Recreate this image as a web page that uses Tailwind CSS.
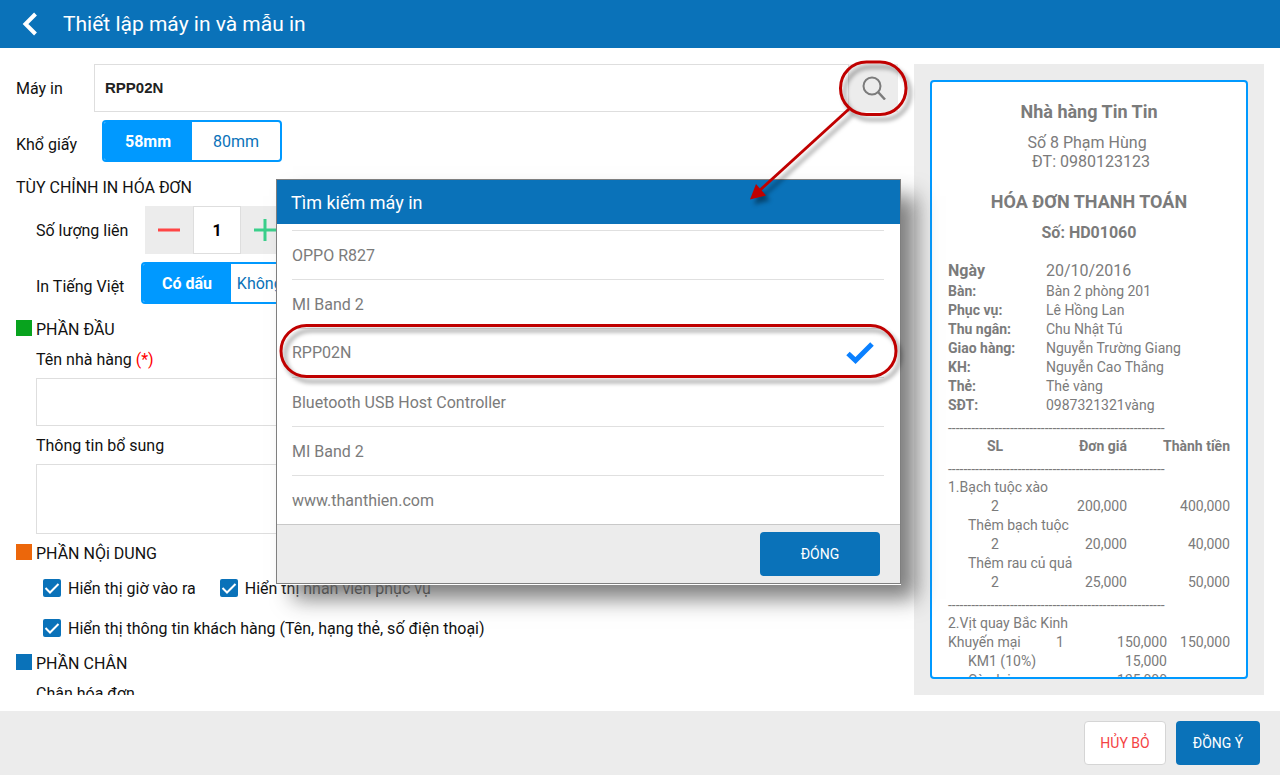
<!DOCTYPE html>
<html lang="vi">
<head>
<meta charset="utf-8">
<title>Thiết lập máy in và mẫu in</title>
<script src="https://cdn.jsdelivr.net/npm/@tailwindcss/browser@4"></script>
</head>
<body class="relative flex h-screen flex-col overflow-hidden bg-white font-['Roboto',sans-serif] text-base text-[#111]">
  <header class="flex h-12 shrink-0 items-center bg-[#0a72b9] text-white">
    <button type="button" aria-label="Quay lại" class="flex h-12 w-[63px] items-center pl-[22px]">
      <svg class="h-6 w-4" viewBox="0 0 16 24" fill="none" stroke="currentColor" stroke-width="4"><path d="M13.500 2L3.500 12l10 10"/></svg>
    </button>
    <h1 class="text-[21px] leading-8">Thiết lập máy in và mẫu in</h1>
  </header>

  <main class="flex min-h-0 flex-1 gap-4 p-4">
    <form class="min-w-0 flex-1 overflow-hidden">
      <div class="flex h-12">
        <label for="printer" class="w-[78px] shrink-0 self-center pt-0.5">Máy in</label>
        <input id="printer" value="RPP02N" class="min-w-0 flex-1 border border-[#dedede] px-2.5 font-['Liberation_Sans',sans-serif] text-[15px] font-bold text-[#222]">
        <button type="button" aria-label="Tìm máy in" class="flex w-[49px] items-center justify-center bg-[#ececec]">
          <svg class="h-6 w-6" viewBox="0 0 24 24" fill="none" stroke="#7b7b7b" stroke-width="2"><circle cx="10" cy="10" r="8.500"/><path d="M16 16l7 7.500" stroke-width="2.500"/></svg>
        </button>
      </div>

      <div role="radiogroup" aria-labelledby="size-label" class="mt-2 flex h-12 items-start">
        <span id="size-label" class="w-[86px] self-center pt-0.5">Khổ giấy</span>
        <div class="flex h-[42px] w-[180px] overflow-hidden rounded border-2 border-[#0099ff] text-[#0a72b9]">
          <label class="flex w-22 items-center justify-center pt-0.5 has-checked:bg-[#0099ff] has-checked:font-bold has-checked:text-white"><input type="radio" name="size" checked class="sr-only">58mm</label>
          <label class="flex flex-1 items-center justify-center pt-0.5 has-checked:bg-[#0099ff] has-checked:font-bold has-checked:text-white"><input type="radio" name="size" class="sr-only">80mm</label>
        </div>
      </div>

      <h2 class="h-[38px] leading-10">TÙY CHỈNH IN HÓA ĐƠN</h2>

      <div class="flex h-12 pl-5">
        <label for="copies" class="w-[109px] self-center pt-0.5">Số lượng liên</label>
        <button type="button" aria-label="Giảm" class="flex w-12 items-center justify-center bg-[#ececec]"><svg class="h-6 w-6" viewBox="0 0 24 24" stroke="#ff4545" stroke-width="3"><path d="M1 12h22"/></svg></button>
        <input id="copies" value="1" class="w-12 border border-[#dedede] pt-0.5 text-center font-bold text-black">
        <button type="button" aria-label="Tăng" class="flex w-12 items-center justify-center bg-[#ececec]"><svg class="h-6 w-6" viewBox="0 0 24 24" stroke="#3bcf8b" stroke-width="3"><path d="M1 12h22M12 1v22"/></svg></button>
      </div>

      <div role="radiogroup" aria-labelledby="accent-label" class="mt-2 flex h-12 items-start pl-5">
        <span id="accent-label" class="w-[105px] self-center pt-0.5">In Tiếng Việt</span>
        <div class="flex h-[42px] w-[180px] overflow-hidden rounded border-2 border-[#0099ff] text-[#0a72b9]">
          <label class="flex w-22 items-center justify-center pt-0.5 has-checked:bg-[#0099ff] has-checked:font-bold has-checked:text-white"><input type="radio" name="accent" checked class="sr-only">Có dấu</label>
          <label class="flex flex-1 items-center justify-center pt-0.5 whitespace-nowrap has-checked:bg-[#0099ff] has-checked:font-bold has-checked:text-white"><input type="radio" name="accent" class="sr-only">Không dấu</label>
        </div>
      </div>

      <h2 class="mt-2 flex items-start gap-1"><span class="mt-0.5 h-4 w-4 bg-[#08a31e]"></span>PHẦN ĐẦU</h2>
      <div class="pl-5">
        <label for="name" class="mt-1.5 block">Tên nhà hàng <span class="text-[#ff0000]">(*)</span></label>
        <input id="name" class="mt-1.5 block h-12 w-full border border-[#dedede] px-2.5">
        <label for="extra" class="mt-2 block">Thông tin bổ sung</label>
        <textarea id="extra" class="mt-1.5 block h-[70px] w-full resize-none border border-[#dedede] p-2.5"></textarea>
      </div>

      <h2 class="mt-2 flex items-start gap-1"><span class="mt-0.5 h-4 w-4 bg-[#ec670b]"></span>PHẦN NỘi DUNG</h2>
      <div class="mt-0.5 flex flex-wrap gap-x-6 pl-[27px]">
        <label class="flex h-10 items-center gap-[7px]">
          <span class="relative h-[18px] w-[18px]"><input type="checkbox" checked class="block h-[18px] w-[18px] appearance-none rounded-xs bg-[#0a72b9]"><svg class="absolute inset-0" viewBox="0 0 18 18" fill="none" stroke="#fff" stroke-width="2"><path d="M2.500 9l4.500 4.500L15.500 5"/></svg></span>
          <span class="pt-0.5">Hiển thị giờ vào ra</span></label>
        <label class="flex h-10 items-center gap-[7px]">
          <span class="relative h-[18px] w-[18px]"><input type="checkbox" checked class="block h-[18px] w-[18px] appearance-none rounded-xs bg-[#0a72b9]"><svg class="absolute inset-0" viewBox="0 0 18 18" fill="none" stroke="#fff" stroke-width="2"><path d="M2.500 9l4.500 4.500L15.500 5"/></svg></span>
          <span class="pt-0.5">Hiển thị nhân viên phục vụ</span></label>
      </div>
      <div class="pl-[27px]">
        <label class="flex h-10 items-center gap-[7px]">
          <span class="relative h-[18px] w-[18px]"><input type="checkbox" checked class="block h-[18px] w-[18px] appearance-none rounded-xs bg-[#0a72b9]"><svg class="absolute inset-0" viewBox="0 0 18 18" fill="none" stroke="#fff" stroke-width="2"><path d="M2.500 9l4.500 4.500L15.500 5"/></svg></span>
          <span class="pt-0.5">Hiển thị thông tin khách hàng (Tên, hạng thẻ, số điện thoại)</span></label>
      </div>

      <h2 class="mt-1 flex items-start gap-1"><span class="mt-0.5 h-4 w-4 bg-[#0a72b9]"></span>PHẦN CHÂN</h2>
      <p class="mt-1.5 pl-5">Chân hóa đơn</p>
    </form>

    <aside class="flex w-[350px] shrink-0 bg-[#ececec] p-4">
      <article class="min-w-0 flex-1 overflow-hidden rounded border-2 border-[#0099ff] bg-white px-4 pt-[18px] text-sm leading-[19px] text-[#7b7b7b]">
        <h2 class="text-center text-lg leading-6 font-bold">Nhà hàng Tin Tin</h2>
        <p class="mt-[9px] pr-1 text-center text-base leading-[19px]">Số 8 Phạm Hùng</p>
        <p class="pl-1 text-center text-base leading-[19px]">ĐT: 0980123123</p>
        <h3 class="mt-[19px] text-center text-lg leading-6 font-bold">HÓA ĐƠN THANH TOÁN</h3>
        <p class="mt-[9px] text-center text-base leading-[19px] font-bold">Số: HD01060</p>
        <dl class="mt-[19px] grid grid-cols-[98px_1fr] [&>dt]:font-bold">
          <dt class="pb-px text-base leading-5">Ngày</dt><dd class="pb-px text-base leading-5">20/10/2016</dd>
          <dt>Bàn:</dt><dd>Bàn 2 phòng 201</dd>
          <dt>Phục vụ:</dt><dd>Lê Hồng Lan</dd>
          <dt>Thu ngân:</dt><dd>Chu Nhật Tú</dd>
          <dt>Giao hàng:</dt><dd>Nguyễn Trường Giang</dd>
          <dt>KH:</dt><dd>Nguyễn Cao Thắng</dd>
          <dt>Thẻ:</dt><dd>Thẻ vàng</dd>
          <dt>SĐT:</dt><dd>0987321321vàng</dd>
        </dl>
        <table class="w-full table-fixed text-right whitespace-nowrap">
          <colgroup><col class="w-[94px]"><col class="w-[85px]"><col></colgroup>
          <tbody>
            <tr><td colspan="3" class="pt-[5px] text-left leading-[17px]">--------------------------------------------------------</td></tr>
            <tr><th class="text-center">SL</th><th>Đơn giá</th><th>Thành tiền</th></tr>
            <tr><td colspan="3" class="pt-[5px] text-left leading-[17px]">--------------------------------------------------------</td></tr>
            <tr><td colspan="3" class="text-left">1.Bạch tuộc xào</td></tr>
            <tr><td class="text-center">2</td><td>200,000</td><td>400,000</td></tr>
            <tr><td colspan="3" class="pl-5 text-left">Thêm bạch tuộc</td></tr>
            <tr><td class="text-center">2</td><td>20,000</td><td>40,000</td></tr>
            <tr><td colspan="3" class="pl-5 text-left">Thêm rau củ quả</td></tr>
            <tr><td class="text-center">2</td><td>25,000</td><td>50,000</td></tr>
            <tr><td colspan="3" class="pt-[5px] text-left leading-[17px]">--------------------------------------------------------</td></tr>
          </tbody>
        </table>
        <table class="w-full table-fixed text-right whitespace-nowrap">
          <colgroup><col class="w-[94px]"><col class="w-9"><col class="w-[89px]"><col></colgroup>
          <tbody>
            <tr><td colspan="4" class="text-left">2.Vịt quay Bắc Kinh</td></tr>
            <tr><td class="text-left">Khuyến mại</td><td class="text-center">1</td><td>150,000</td><td>150,000</td></tr>
            <tr><td class="pl-5 text-left">KM1 (10%)</td><td></td><td>15,000</td><td></td></tr>
            <tr><td class="pl-5 text-left">Còn lại</td><td></td><td>135,000</td><td></td></tr>
          </tbody>
        </table>
      </article>
    </aside>
  </main>

  <footer class="flex h-16 shrink-0 items-center justify-end gap-2.5 bg-[#ececec] px-5 text-sm">
    <button type="button" class="h-11 w-[82px] rounded border border-[#d5d5d5] bg-white text-[#f44343]">HỦY BỎ</button>
    <button type="button" class="h-11 w-[84px] rounded bg-[#0a72b9] text-white">ĐỒNG Ý</button>
  </footer>

  <section role="dialog" aria-labelledby="dialog-title" class="absolute top-[179px] left-[276px] w-[625px] border border-[#7f7f7f] bg-white shadow-[0_1px_0_#fff,16px_16px_20px_-1px_rgba(112,112,112,0.9)]">
    <h2 id="dialog-title" class="h-11 bg-[#0a72b9] px-3.5 text-lg leading-[46px] text-white">Tìm kiếm máy in</h2>
    <ul class="pt-1.5 pr-4 pl-[15px] text-[#7b7b7b] [&>li]:h-[49px] [&>li]:border-t [&>li]:border-[#e0e0e0] [&>li]:leading-[50px]">
      <li>OPPO R827</li>
      <li>MI Band 2</li>
      <li class="flex items-center justify-between">RPP02N
        <svg class="mr-2.5 h-[22px] w-7" viewBox="0 0 28 22" fill="none" stroke="#0a80ff" stroke-width="5"><path d="M2 11.500l7.500 7L26 2"/></svg></li>
      <li>Bluetooth USB Host Controller</li>
      <li>MI Band 2</li>
      <li>www.thanthien.com</li>
    </ul>
    <div class="flex justify-end border-t border-[#c8c8c8] bg-[#ececec] px-5 pt-[7px] pb-[7px]">
      <button type="button" class="h-11 w-[120px] rounded bg-[#0a72b9] text-sm text-white">ĐÓNG</button>
    </div>
  </section>

  <!-- Guide marks: search button, arrow to the dialog, chosen printer -->
  <svg class="pointer-events-none absolute top-0 left-0 h-[400px] w-[920px] drop-shadow-[4px_5px_2px_rgba(0,0,0,0.4)]" viewBox="0 0 920 400" fill="none" stroke="#c00000" stroke-width="3">
    <rect x="840.500" y="62" width="65.500" height="52.500" rx="26"/>
    <path d="M849 109L759 191"/>
    <path d="M750 199.500l6-15.500 10 11.500z" fill="#c00000" stroke="none"/>
    <rect x="281" y="325.500" width="615" height="51" rx="25.500"/>
  </svg>
</body>
</html>
